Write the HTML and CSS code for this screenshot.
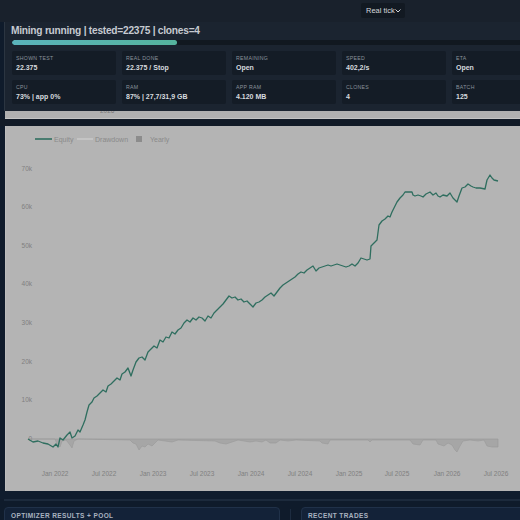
FILE: index.html
```html
<!DOCTYPE html>
<html>
<head>
<meta charset="utf-8">
<link rel="stylesheet" href="styles.css">
</head>
<body>
<div class="page">
  <div class="topbar">
    <div class="select">Real tick<svg class="chev" width="6" height="4" viewBox="0 0 6 4"><path d="M0.5 0.5 L3 3 L5.5 0.5" fill="none" stroke="#d0d4d8" stroke-width="1"/></svg></div>
  </div>
  <section class="status">
    <h1 class="status-title">Mining running | tested=22375 | clones=4</h1>
    <div class="progress"><div class="fill" style="width:165px"></div></div>
    <div class="stats">
      <div class="stat"><div class="lbl">SHOWN TEST</div><div class="val">22.375</div></div>
      <div class="stat"><div class="lbl">REAL DONE</div><div class="val">22.375 / Stop</div></div>
      <div class="stat"><div class="lbl">REMAINING</div><div class="val">Open</div></div>
      <div class="stat"><div class="lbl">SPEED</div><div class="val">402,2/s</div></div>
      <div class="stat"><div class="lbl">ETA</div><div class="val">Open</div></div>
      <div class="stat"><div class="lbl">CPU</div><div class="val">73% | app 0%</div></div>
      <div class="stat"><div class="lbl">RAM</div><div class="val">87% | 27,7/31,9 GB</div></div>
      <div class="stat"><div class="lbl">APP RAM</div><div class="val">4.120 MB</div></div>
      <div class="stat"><div class="lbl">CLONES</div><div class="val">4</div></div>
      <div class="stat"><div class="lbl">BATCH</div><div class="val">125</div></div>
    </div>
  </section>
  <div class="strip"><span class="strip-text">2026</span></div>
  <div class="gap"></div>
  <div class="chart-card">
    <svg class="chart" width="560" height="365" viewBox="5 126 560 365">
      <g class="legend" font-family="'Liberation Sans', Arial, sans-serif" font-size="7" fill="#8a8a8a">
        <line x1="35" y1="139" x2="52" y2="139" stroke="#2f6e5f" stroke-width="1.6"/>
        <text x="54" y="141.5">Equity</text>
        <line x1="77" y1="139" x2="93" y2="139" stroke="#c8c8c8" stroke-width="1.6"/>
        <text x="95" y="141.5">Drawdown</text>
        <rect x="136" y="136" width="6" height="6" fill="#8c8c8c"/>
        <text x="150" y="141.5">Yearly</text>
      </g>
      <g font-family="'Liberation Sans', Arial, sans-serif" font-size="6.5" fill="#808080" text-anchor="end">
        <text x="32" y="170.5">70k</text>
        <text x="32" y="209">60k</text>
        <text x="32" y="247.5">50k</text>
        <text x="32" y="286">40k</text>
        <text x="32" y="325">30k</text>
        <text x="32" y="364">20k</text>
        <text x="32" y="402">10k</text>
        <text x="32" y="441">0</text>
      </g>
      <g font-family="'Liberation Sans', Arial, sans-serif" font-size="6.5" fill="#808080" text-anchor="middle">
        <text x="55" y="476">Jan 2022</text>
        <text x="104" y="476">Jul 2022</text>
        <text x="153" y="476">Jan 2023</text>
        <text x="202" y="476">Jul 2023</text>
        <text x="251" y="476">Jan 2024</text>
        <text x="300" y="476">Jul 2024</text>
        <text x="349" y="476">Jan 2025</text>
        <text x="397" y="476">Jul 2025</text>
        <text x="447" y="476">Jan 2026</text>
        <text x="496" y="476">Jul 2026</text>
      </g>
      <path d="M28 439 L55 439 L57 444 L60 447 L62 441 L66 440 L70 445 L72 448 L74 441 L78 439 L130 440 L133 443 L136 444 L139 450 L142 446 L145 447 L148 444 L152 446 L155 443 L158 440 L165 441 L172 442 L178 440 L215 441 L220 443 L226 444 L232 442 L238 440 L244 441 L250 442 L256 441 L262 442 L266 440 L270 443 L276 443 L280 440 L288 441 L296 440 L320 441 L322 443 L328 444 L330 440 L368 440 L370 442 L372 440 L410 440 L413 444 L420 445 L423 440 L436 440 L438 444 L444 446 L448 443 L452 445 L455 450 L457 452 L460 446 L463 441 L470 440 L478 441 L484 440 L487 446 L492 447 L498 447 L498 439 Z" fill="#a6a6a6" stroke="#989898" stroke-width="0.6"/>
      <path class="equity" d="M28 439 L33 442 L38 441 L43 443 L48 444 L53 447 L56 444 L58 447 L60 438 L63 440 L67 435 L70 432 L72 438 L75 436 L78 430 L80 432 L83 425 L85 420 L87 412 L89 405 L92 402 L94 398 L97 396 L100 393 L103 390 L106 392 L108 386 L111 384 L114 381 L117 378 L120 380 L122 374 L125 372 L128 368 L131 376 L133 370 L136 362 L139 358 L142 357 L145 360 L148 352 L151 349 L154 346 L157 348 L160 340 L163 342 L166 337 L169 338 L172 332 L175 334 L178 330 L181 328 L184 323 L187 320 L190 322 L193 318 L196 320 L199 317 L202 318 L205 321 L208 316 L211 318 L214 313 L217 310 L220 307 L223 304 L226 300 L229 296 L232 298 L235 297 L238 300 L241 299 L244 302 L247 301 L250 304 L253 307 L256 303 L259 302 L262 300 L265 297 L268 295 L271 293 L274 296 L277 292 L280 288 L283 285 L286 283 L289 281 L292 279 L295 277 L298 274 L301 272 L304 273 L307 270 L310 268 L313 266 L316 271 L319 268 L322 267 L325 266 L328 265 L331 266 L334 265 L337 264 L340 265 L343 266 L346 267 L349 266 L352 264 L355 266 L358 263 L361 258 L364 259 L367 260 L370 259 L371 246 L374 243 L377 240 L379 225 L382 221 L385 219 L388 216 L390 217 L392 212 L394 208 L397 202 L400 198 L403 195 L405 192 L412 192 L413 195 L415 196 L418 195 L421 196 L423 197 L426 194 L430 192 L433 195 L436 193 L438 196 L440 197 L443 195 L447 196 L450 193 L453 198 L457 202 L459 196 L462 188 L465 187 L468 184 L471 186 L473 187 L476 188 L480 188 L485 189 L487 180 L490 175 L492 178 L494 180 L498 181" fill="none" stroke="#2f6e5f" stroke-width="1.3" stroke-linejoin="round"/>
    </svg>
  </div>
  <div class="under"></div>
  <div class="sep"></div>
  <div class="bottom">
    <div class="card"><h2 class="card-title">OPTIMIZER RESULTS + POOL</h2></div>
    <div class="vline"></div>
    <div class="card"><h2 class="card-title">RECENT TRADES</h2></div>
  </div>
</div>
</body>
</html>
```
FILE: styles.css
```css
html, body {
  margin: 0;
  padding: 0;
  overflow: hidden;
  background: #0f1b2b;
  font-family: "Liberation Sans", Arial, sans-serif;
}
.page {
  width: 565px;
  min-height: 520px;
  background: #0f1b2b;
}
.topbar {
  height: 22px;
  background: #19212c;
  display: flex;
  align-items: flex-start;
  padding-left: 361px;
  padding-top: 3px;
  box-sizing: border-box;
}
.select {
  height: 15px;
  padding: 0 4px 0 5px;
  background: #121922;
  border-radius: 2px;
  color: #d4d8dc;
  font-size: 7.5px;
  display: flex;
  align-items: center;
}
.status {
  margin-left: 4px;
  background: #1b2430;
  border-left: 1px solid #2b3541;
  padding: 2px 7px 6px 6px;
  height: 89px;
  box-sizing: border-box;
}
.status-title {
  margin: 0;
  font-size: 10.2px;
  font-weight: 700;
  letter-spacing: -0.25px;
  color: #c6cad0;
  line-height: 14px;
}
.progress {
  margin: 2px 0 6px 1px;
  height: 5px;
  background: #111820;
  border-radius: 3px;
  overflow: hidden;
}
.fill {
  height: 100%;
  background: linear-gradient(90deg, #5ab3bb, #55b39d);
  border-radius: 3px;
}
.stats {
  display: grid;
  grid-template-columns: repeat(5, 104px);
  column-gap: 6px;
  row-gap: 5px;
  margin-left: 1px;
}
.stat {
  background: #141c26;
  border-radius: 2px;
  height: 24px;
  padding: 4px 4px 0 4px;
  box-sizing: border-box;
}
.lbl {
  font-size: 5.2px;
  color: #8a929c;
  letter-spacing: 0.3px;
  line-height: 6px;
}
.val {
  font-size: 7px;
  font-weight: 700;
  color: #d6dadf;
  line-height: 10px;
  margin-top: 2px;
}
.strip {
  margin-left: 5px;
  height: 7px;
  background: #b0b0b0;
  overflow: hidden;
  position: relative;
  border-bottom: 1px solid #c4c4c4;
}
.strip-text {
  position: absolute;
  left: 95px;
  top: -4px;
  font-size: 6.5px;
  color: #7a7a7a;
}
.gap {
  height: 7px;
  background: #121b27;
}
.chart-card {
  margin-left: 5px;
  height: 365px;
  background: #b4b4b4;
  border-left: 1px solid #bcbcbc;
  overflow: hidden;
}
.chart {
  display: block;
  margin-left: -1px;
}
.under {
  height: 8px;
  background: #0f1c2d;
}
.sep {
  height: 2px;
  margin-left: 4px;
  background: #1c2a3c;
}
.bottom {
  display: grid;
  grid-template-columns: 276px 1px 1fr;
  column-gap: 10px;
  padding-top: 6px;
  padding-left: 4px;
}
.card {
  height: 40px;
  background: #132238;
  border: 1px solid #203149;
  border-radius: 4px;
  padding: 4px 6px;
  box-sizing: border-box;
}
.vline {
  background: #1d2c40;
  height: 40px;
  margin-top: 2px;
}
.card-title {
  margin: 0;
  font-size: 6.5px;
  font-weight: 700;
  color: #a9b3c0;
  letter-spacing: 0.4px;
  line-height: 8px;
}
```
